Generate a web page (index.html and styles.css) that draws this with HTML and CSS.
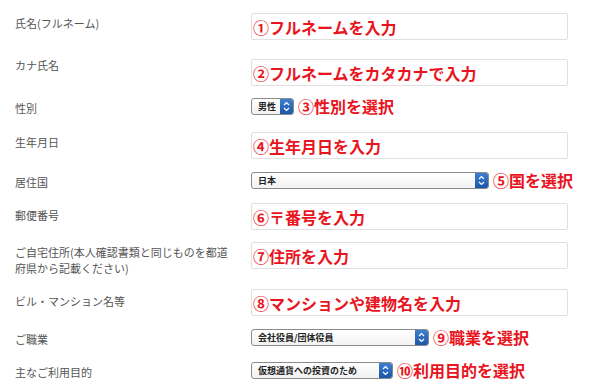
FILE: index.html
```html
<!DOCTYPE html>
<html>
  <head>
    <title>お客様情報の入力</title>
    <link rel="stylesheet" href="styles.css">
  </head>
  <body>
    <form class="profile-form">
      <div class="label">氏名(フルネーム)</div>
      <div class="field"><div class="text-box"><span class="note">①フルネームを入力</span></div></div>

      <div class="label label-up">カナ氏名</div>
      <div class="field"><div class="text-box"><span class="note">②フルネームをカタカナで入力</span></div></div>

      <div class="label">性別</div>
      <div class="field">
        <div class="select select-gender"><span class="select-value">男性</span><span class="select-arrows"><svg width="7" height="11" viewBox="0 0 7 11"><path d="M1 4 L3.5 1.5 L6 4 M1 7 L3.5 9.5 L6 7" fill="none" stroke="#fff" stroke-width="1.2"/></svg></span></div>
        <span class="note">③性別を選択</span>
      </div>

      <div class="label">生年月日</div>
      <div class="field"><div class="text-box"><span class="note">④生年月日を入力</span></div></div>

      <div class="label">居住国</div>
      <div class="field">
        <div class="select select-country"><span class="select-value">日本</span><span class="select-arrows"><svg width="7" height="11" viewBox="0 0 7 11"><path d="M1 4 L3.5 1.5 L6 4 M1 7 L3.5 9.5 L6 7" fill="none" stroke="#fff" stroke-width="1.2"/></svg></span></div>
        <span class="note">⑤国を選択</span>
      </div>

      <div class="label label-down">郵便番号</div>
      <div class="field"><div class="text-box"><span class="note">⑥〒番号を入力</span></div></div>

      <div class="label">ご自宅住所(本人確認書類と同じものを都道府県から記載ください)</div>
      <div class="field"><div class="text-box"><span class="note">⑦住所を入力</span></div></div>

      <div class="label label-down">ビル・マンション名等</div>
      <div class="field"><div class="text-box"><span class="note">⑧マンションや建物名を入力</span></div></div>

      <div class="label">ご職業</div>
      <div class="field">
        <div class="select select-job"><span class="select-value">会社役員/団体役員</span><span class="select-arrows"><svg width="7" height="11" viewBox="0 0 7 11"><path d="M1 4 L3.5 1.5 L6 4 M1 7 L3.5 9.5 L6 7" fill="none" stroke="#fff" stroke-width="1.2"/></svg></span></div>
        <span class="note">⑨職業を選択</span>
      </div>

      <div class="label">主なご利用目的</div>
      <div class="field">
        <div class="select select-purpose"><span class="select-value">仮想通貨への投資のため</span><span class="select-arrows"><svg width="7" height="11" viewBox="0 0 7 11"><path d="M1 4 L3.5 1.5 L6 4 M1 7 L3.5 9.5 L6 7" fill="none" stroke="#fff" stroke-width="1.2"/></svg></span></div>
        <span class="note">⑩利用目的を選択</span>
      </div>
    </form>
  </body>
</html>
```

FILE: styles.css
```css
body {
  margin: 0;
  padding: 0;
  background-color: #ffffff;
  font-family: "Noto Sans CJK JP", "Noto Sans", sans-serif;
}

.profile-form {
  display: grid;
  grid-template-columns: 236px 1fr;
  grid-template-rows: 46px 39px 34px 40px 31px 39px 47px 40px 33px auto;
  padding: 13px 0 0 15px;
}

.label {
  width: 220px;
  padding-top: 2px;
  font-size: 11px;
  line-height: 16px;
  color: #555555;
}

.label-up {
  margin-top: -4px; /* this one sits higher in the original */
}

.label-down {
  padding-top: 4px;
}

.field {
  display: flex;
  align-items: flex-start;
}

.text-box {
  box-sizing: border-box;
  width: 317px;
  height: 27px;
  border: 1px solid #e0e0e0;
  border-radius: 2px;
  display: flex;
  align-items: center;
  padding-left: 1px;
}

.note {
  color: #e8141e;
  font-weight: bold;
  font-size: 16px;
  line-height: 18px;
  white-space: nowrap;
}

.field > .note {
  margin-left: 4px;
  margin-top: -1px;
}

.select {
  box-sizing: border-box;
  height: 17px;
  border: 1px solid #8a8a8a;
  border-radius: 3px;
  display: flex;
  overflow: hidden;
  background: linear-gradient(#ffffff, #f2f2f2);
}

.select-value {
  flex: 1;
  padding-left: 6px;
  font-size: 9px;
  line-height: 15px;
  color: #222222;
  font-weight: bold;
}

.select-arrows {
  width: 13px;
  display: flex;
  align-items: center;
  justify-content: center;
  background: linear-gradient(#3f7fd0, #1b56a8);
}

.select-gender { width: 43px; }
.select-country { width: 238px; }
.select-job { width: 178px; }
.select-purpose { width: 142px; }
```
